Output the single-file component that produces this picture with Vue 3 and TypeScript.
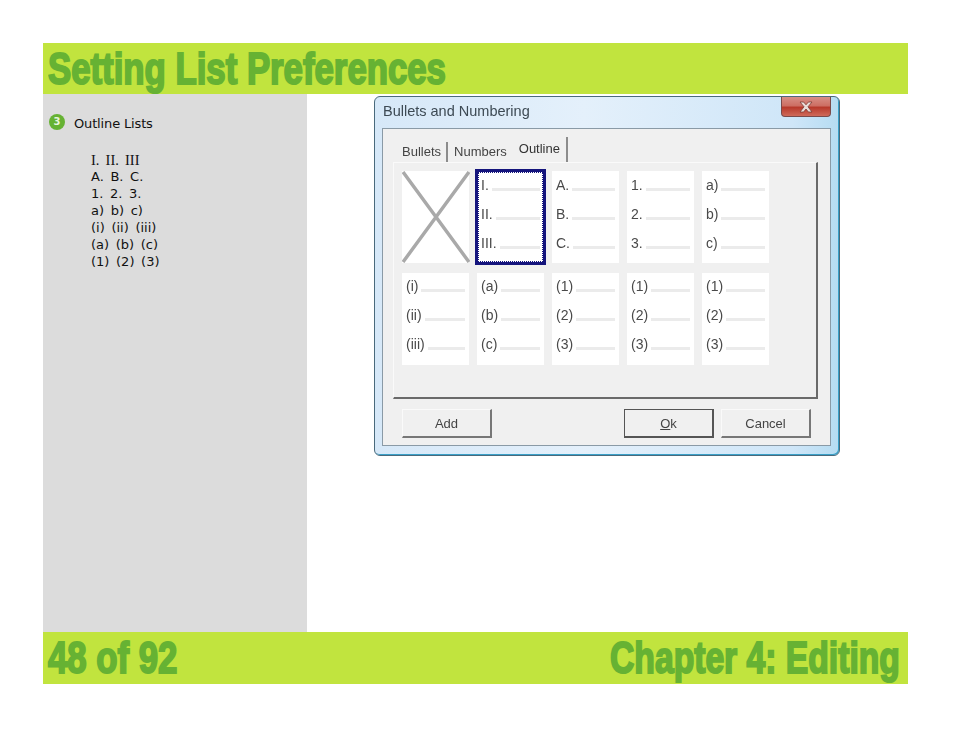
<template>
  <div class="slide">
    <header class="bar title-bar">
      <h1 class="impact">Setting List Preferences</h1>
    </header>

    <main class="middle">
      <aside class="side">
        <div class="bullet-row">
          <span class="bullet">3</span>
          <span class="bullet-text">Outline Lists</span>
        </div>
        <div class="outline">
          <div class="roman">I. II. III</div>
          <div v-for="line in outlineLines" :key="line">{{ line }}</div>
        </div>
      </aside>

      <section class="dialog">
        <div class="caption">
          <span class="caption-text soft">Bullets and Numbering</span>
          <span class="close">
            <svg width="16" height="12" viewBox="0 0 16 12">
              <path d="M2 1 L5.6 1 L8 3.8 L10.4 1 L14 1 L10 5.8 L14 11 L10.4 11 L8 8 L5.6 11 L2 11 L6 5.8 Z" fill="#e9dcd8" stroke="#7c3a34" stroke-width="0.8" />
            </svg>
          </span>
        </div>
        <div class="client">
          <div class="tabs">
            <span class="tab"><span class="soft">Bullets</span></span>
            <span class="tab"><span class="soft">Numbers</span></span>
            <span class="tab active"><span class="soft">Outline</span></span>
          </div>
          <div class="tab-panel">
            <div class="grid">
              <div class="cell none">
                <svg width="68" height="92" viewBox="0 0 68 92">
                  <path d="M1 1 L67 91 M67 1 L1 91" stroke="#a9a9a9" stroke-width="3.5" fill="none" />
                </svg>
              </div>
              <div
                v-for="cell in cells"
                :key="cell.id"
                class="cell"
                :class="{ selected: cell.selected }"
              >
                <div v-for="label in cell.labels" :key="label" class="cell-line">
                  <span class="label soft">{{ label }}</span>
                  <span class="rule"></span>
                </div>
              </div>
            </div>
          </div>
          <div class="buttons">
            <button class="btn" type="button"><span class="soft">Add</span></button>
            <span class="spacer"></span>
            <button class="btn default" type="button"><span class="soft"><u>O</u>k</span></button>
            <button class="btn" type="button"><span class="soft">Cancel</span></button>
          </div>
        </div>
      </section>
    </main>

    <footer class="bar foot-bar">
      <span class="impact left">48 of 92</span>
      <span class="impact right">Chapter 4: Editing</span>
    </footer>
  </div>
</template>

<script setup lang="ts">
const outlineLines = ['A. B. C.', '1. 2. 3.', 'a) b) c)', '(i) (ii) (iii)', '(a) (b) (c)', '(1) (2) (3)']

const cells = [
  { id: 1, labels: ['I.', 'II.', 'III.'], selected: true },
  { id: 2, labels: ['A.', 'B.', 'C.'], selected: false },
  { id: 3, labels: ['1.', '2.', '3.'], selected: false },
  { id: 4, labels: ['a)', 'b)', 'c)'], selected: false },
  { id: 5, labels: ['(i)', '(ii)', '(iii)'], selected: false },
  { id: 6, labels: ['(a)', '(b)', '(c)'], selected: false },
  { id: 7, labels: ['(1)', '(2)', '(3)'], selected: false },
  { id: 8, labels: ['(1)', '(2)', '(3)'], selected: false },
  { id: 9, labels: ['(1)', '(2)', '(3)'], selected: false }
]
</script>

<style>
html,
body {
  margin: 0;
  background: #fff;
}
</style>

<style scoped>
.slide {
  width: 865px;
  margin: 43px 0 0 43px;
  font-family: "DejaVu Sans", sans-serif;
}

.bar {
  background: #c1e43e;
  display: flex;
  align-items: center;
  overflow: hidden;
}

.title-bar {
  height: 51px;
  padding-left: 5px;
}

.foot-bar {
  height: 52px;
  padding: 0 8px 0 5px;
  justify-content: space-between;
}

.impact {
  display: inline-block;
  margin: 0;
  font-family: "Liberation Sans", sans-serif;
  font-size: 44px;
  font-weight: 700;
  line-height: 50px;
  color: #66b233;
  white-space: nowrap;
  -webkit-text-stroke: 2px #66b233;
  transform: scaleX(0.79);
  transform-origin: left center;
}

.impact.left {
  transform: scaleX(0.79);
}

.impact.right {
  transform: scaleX(0.765);
  transform-origin: right center;
}

.middle {
  display: flex;
  height: 538px;
}

.side {
  width: 264px;
  background: #dcdcdc;
  padding: 20px 0 0 6px;
  box-sizing: border-box;
  font-size: 13px;
  color: #111;
}

.bullet-row {
  display: flex;
  align-items: center;
  gap: 9px;
  height: 20px;
  line-height: 20px;
}

.bullet-text {
  letter-spacing: -0.15px;
}

.bullet {
  width: 16px;
  height: 16px;
  margin-top: -5px;
  border-radius: 50%;
  background: #66b233;
  color: #e8f5dc;
  font-size: 10px;
  font-weight: 700;
  line-height: 16px;
  text-align: center;
}

.outline {
  margin: 18px 0 0 42px;
  line-height: 17px;
  white-space: pre;
  word-spacing: 2.5px;
}

.roman {
  font-family: "Liberation Serif", serif;
  font-size: 14.5px;
  margin-bottom: -1px;
}

.dialog {
  width: 466px;
  height: 360px;
  margin: 2px 0 0 67px;
  box-sizing: border-box;
  border: 1px solid #4a6a7c;
  border-radius: 6px;
  background: linear-gradient(90deg, #d6e8f8 0%, #e4f0fb 45%, #cfe6f8 90%, #b5dcf2 100%);
  padding: 0 8px 8px 7px;
  box-shadow: inset -1px -1px 0 #3aa0c8;
  filter: blur(0.4px);
}

/* own layer so the text gets grey antialiasing, the fringes looked brown */
.soft {
  display: inline-block;
  will-change: opacity;
}

.caption {
  height: 31px;
  display: flex;
  align-items: flex-start;
  justify-content: space-between;
}

.caption-text {
  font-family: "Liberation Sans", sans-serif;
  font-size: 14.5px;
  line-height: 29px;
  color: #3d4a54;
  margin-left: 1px;
}

.close {
  width: 50px;
  height: 20px;
  box-sizing: border-box;
  border: 1px solid #7a4a4a;
  border-top: none;
  border-radius: 0 0 4px 4px;
  background: linear-gradient(#d88f86 0%, #cd6f64 45%, #b83a2c 55%, #cf6a5a 100%);
  display: flex;
  align-items: center;
  justify-content: center;
}

.client {
  height: 318px;
  box-sizing: border-box;
  border: 1px solid #8a9aa6;
  background: #f0f0f0;
  padding: 14px 12px 0 10px;
}

.tabs {
  display: flex;
  align-items: flex-end;
  height: 19px;
  margin-left: 5px;
  font-family: "Liberation Sans", sans-serif;
  font-size: 13px;
  color: #444;
}

.tab {
  height: 20px;
  line-height: 20px;
  padding: 0 5px 0 4px;
  border-right: 2px solid #8c8c8c;
}

.tab:nth-child(2) {
  border-right: none;
  padding: 0 0 0 6px;
}

.tab.active {
  height: 25px;
  line-height: 24px;
  padding: 0 6px 0 12px;
  color: #333;
}

.tab-panel {
  height: 237px;
  box-sizing: border-box;
  border-top: 1px solid #fafafa;
  border-left: 1px solid #fafafa;
  border-right: 2px solid #6a6a6a;
  border-bottom: 2px solid #6a6a6a;
  padding: 8px 0 0 8px;
}

.grid {
  display: grid;
  grid-template-columns: repeat(5, 67px);
  grid-auto-rows: 92px;
  column-gap: 8px;
  row-gap: 10px;
}

.cell {
  background: #fff;
  padding: 0 4px;
  position: relative;
}

.cell:nth-child(-n + 5) {
  padding-top: 1px;
}

.cell.none {
  padding: 0;
}

.cell.none svg {
  display: block;
}

.cell.selected::before {
  content: "";
  position: absolute;
  inset: -2px -2px -2px -2px;
  border: 3px solid #14147c;
  outline: 1px dotted #14147c;
  outline-offset: -4px;
}

.cell-line {
  height: 29px;
  display: flex;
  align-items: center;
  gap: 3px;
  font-family: "Liberation Sans", sans-serif;
  font-size: 14px;
  color: #4a4a4a;
}

.cell-line:first-child {
  margin-top: -2px;
}

.label {
  flex: none;
}

.rule {
  flex: 1;
  height: 3px;
  margin-top: 9px;
  background: #ebebeb;
}

.buttons {
  display: flex;
  gap: 7px;
  margin: 10px 0 0 9px;
}

.spacer {
  flex: none;
  width: 118px;
}

.btn {
  width: 90px;
  height: 29px;
  box-sizing: border-box;
  padding: 0;
  border: none;
  border-top: 1px solid #fafafa;
  border-left: 1px solid #fafafa;
  border-right: 2px solid #777;
  border-bottom: 2px solid #777;
  background: #f0f0f0;
  font-family: "Liberation Sans", sans-serif;
  font-size: 13px;
  color: #444;
}

.btn.default {
  border: 2px solid #555;
  border-top-width: 1px;
  border-left-width: 1px;
}
</style>
